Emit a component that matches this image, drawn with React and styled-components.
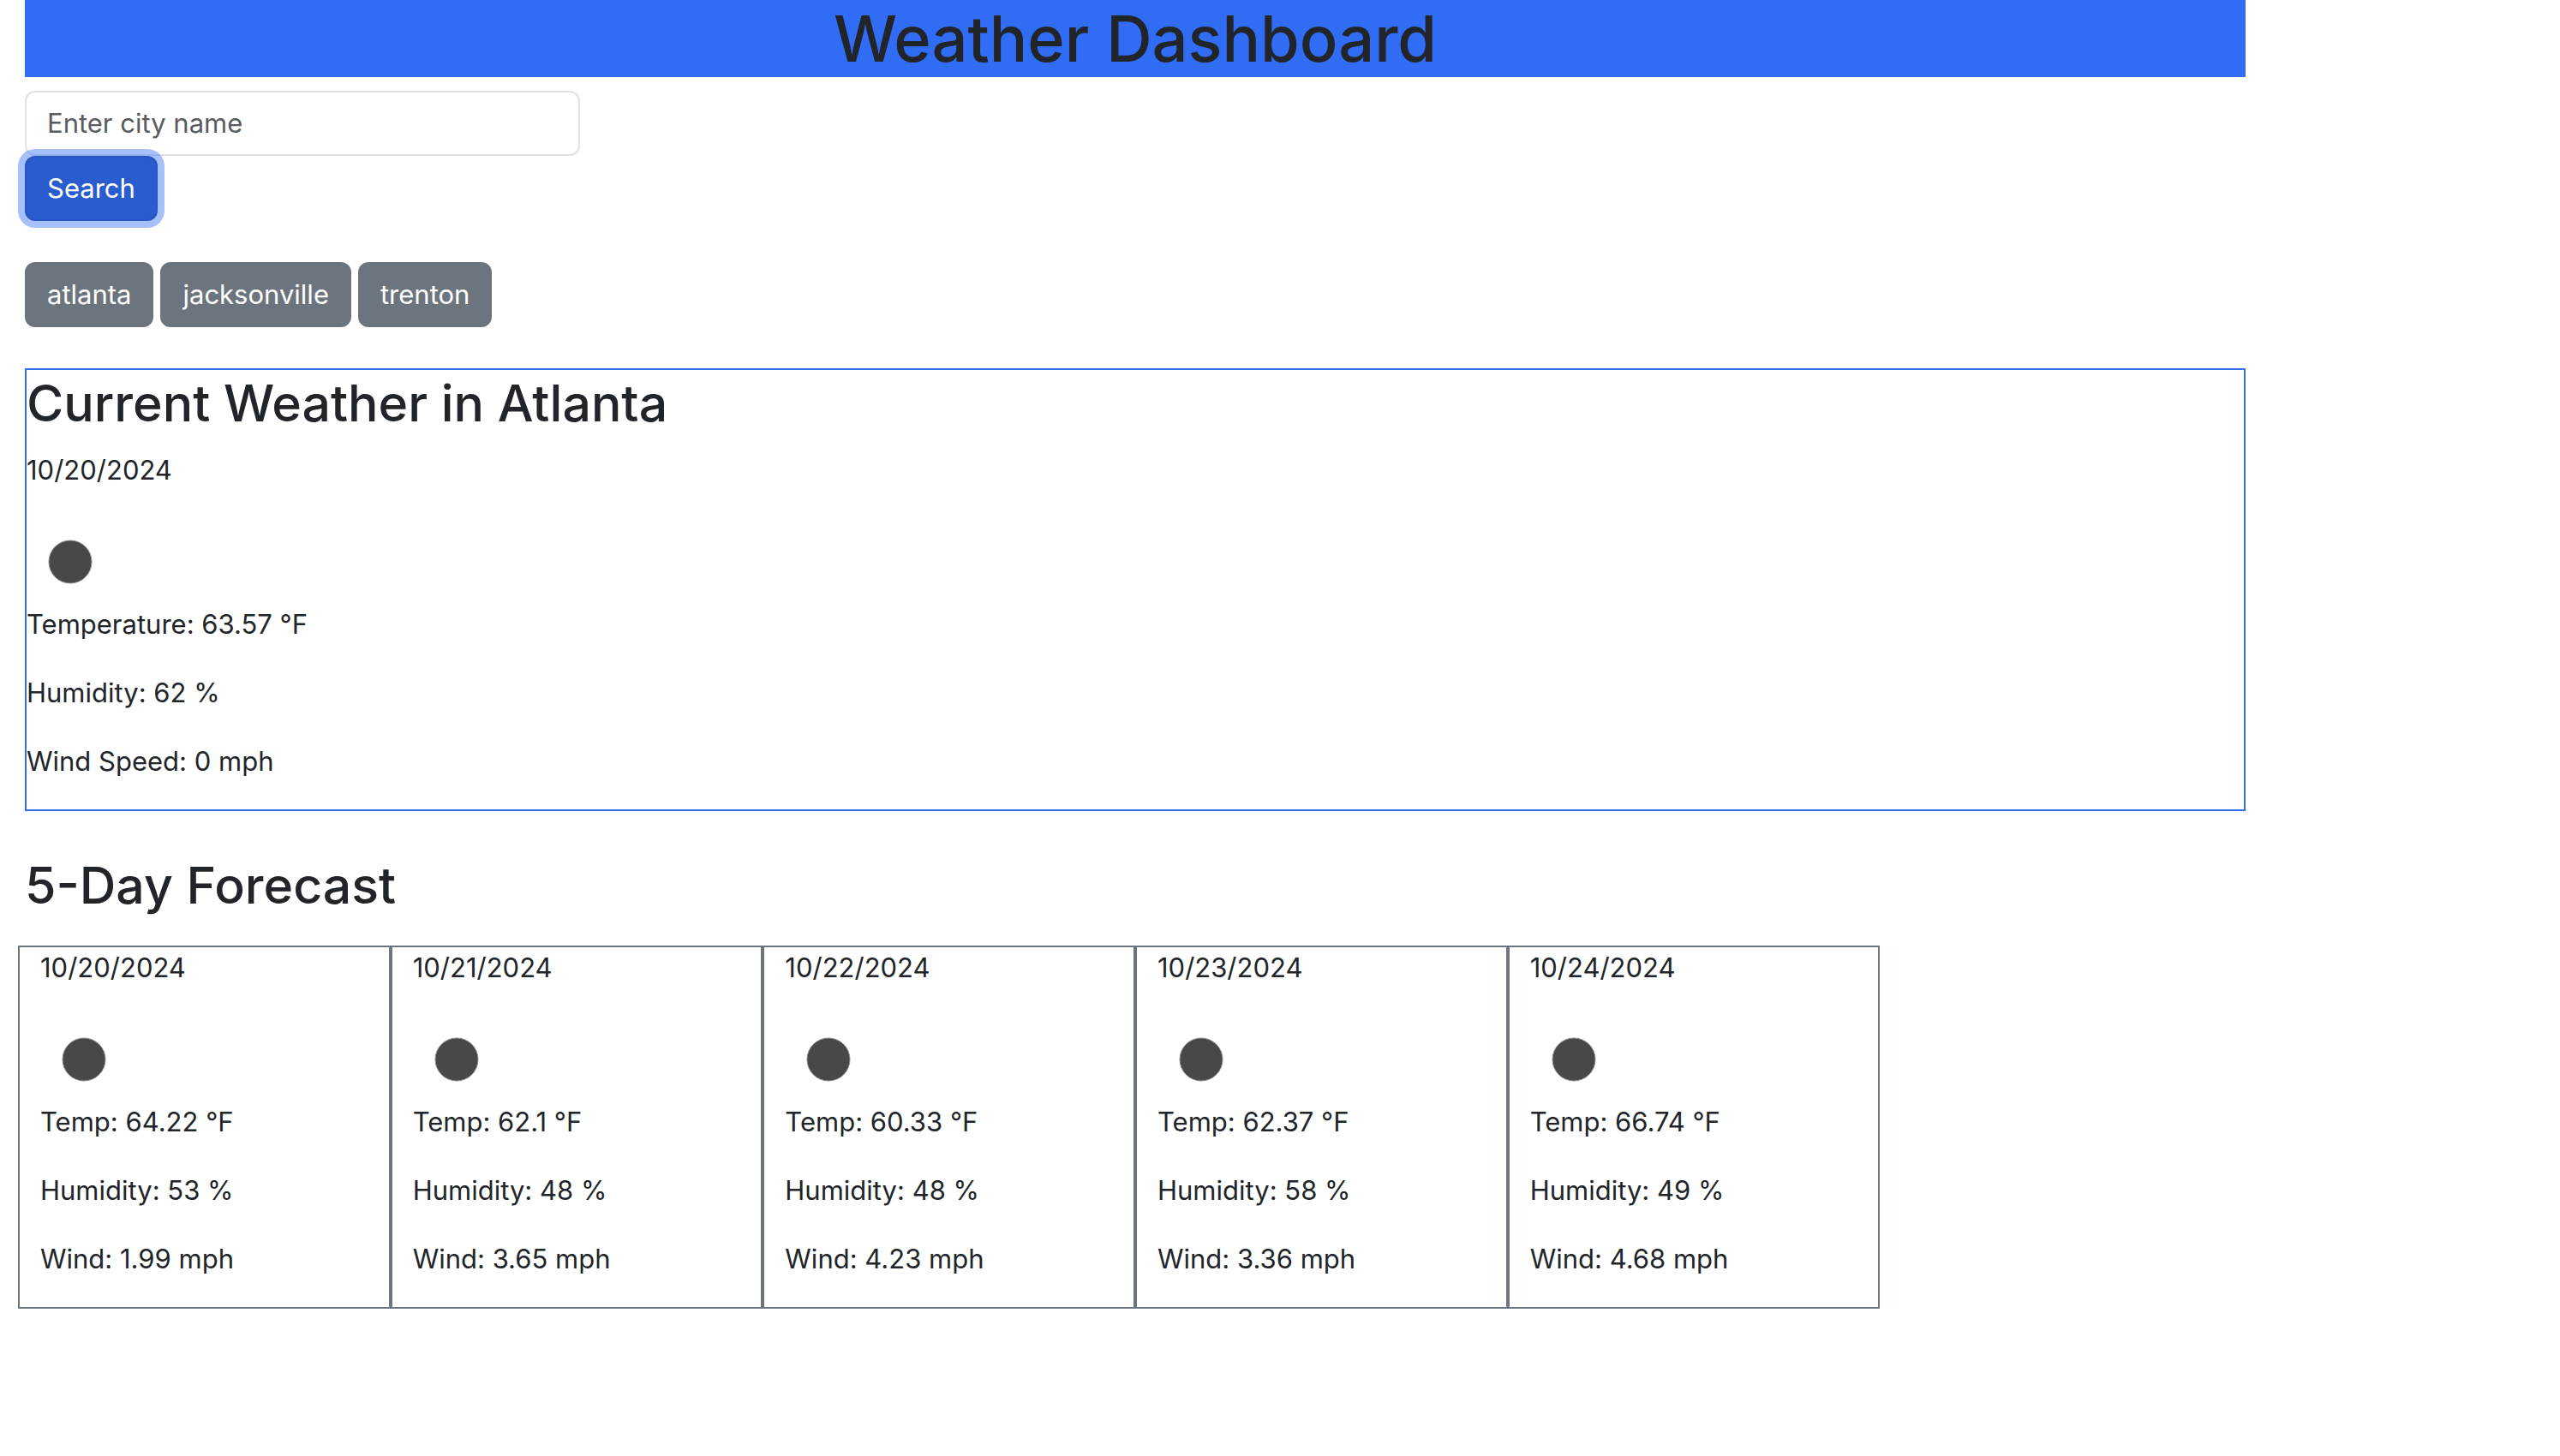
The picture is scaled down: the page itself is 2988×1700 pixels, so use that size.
import React, { useState } from "react";
import styled, { createGlobalStyle } from "styled-components";

const GlobalStyle = createGlobalStyle`
  *, *::before, *::after { box-sizing: border-box; }
  body {
    margin: 0;
    background: #ffffff;
    color: #212529;
    font-family: Inter, "Liberation Sans", sans-serif;
    font-size: 31px;
    line-height: 48px;
  }
`;

const Container = styled.main`
  width: 100%;
  max-width: 2650px;
  padding: 0 29px;
`;

const Banner = styled.header`
  background: #316cf4;
  text-align: center;
`;

const Title = styled.h1`
  margin: 0;
  font-size: 74px;
  font-weight: 500;
  line-height: 90px;
`;

const SearchForm = styled.form`
  display: flex;
  flex-direction: column;
  align-items: flex-start;
  margin: 16px 0 48px;
`;

const CityInput = styled.input`
  width: 25%;
  padding: 12px 24px;
  border: 2px solid #dee2e6;
  border-radius: 12px;
  background: #ffffff;
  color: inherit;
  font: inherit;
  outline: 0;

  &::placeholder {
    color: #595c5f;
    opacity: 1;
  }
`;

const Button = styled.button`
  padding: 12px 24px;
  border: 2px solid ${({ $primary }) => ($primary ? "#2756c3" : "#6c757d")};
  border-radius: 12px;
  background: ${({ $primary }) => ($primary ? "#295ccf" : "#6c757d")};
  box-shadow: ${({ $primary }) => ($primary ? "0 0 0 8px rgba(80, 130, 246, 0.5)" : "none")};
  color: #ffffff;
  font: inherit;
  cursor: pointer;
`;

const History = styled.nav`
  display: flex;
  flex-wrap: wrap;
  gap: 8px;
  margin-bottom: 48px;
`;

const Current = styled.section`
  margin-bottom: 48px;
  border: 2px solid #316cf4;
`;

const Heading = styled.h2`
  margin: 0 0 16px;
  font-size: 59px;
  font-weight: 500;
  line-height: 77px;
`;

const Reading = styled.p`
  margin: 0 0 32px;
`;

const Icon = styled.svg`
  display: block;
  width: 100px;
  height: 100px;
`;

const Days = styled.div`
  display: grid;
  grid-template-columns: repeat(6, 1fr);
  margin: 32px -8px 0;
`;

const Day = styled.article`
  padding: 0 24px;
  border: 2px solid #6c757d;
`;

const history = ["atlanta", "jacksonville", "trenton"];

const forecast = [
  { date: "10/20/2024", temp: "64.22", humidity: 53, wind: "1.99" },
  { date: "10/21/2024", temp: "62.1", humidity: 48, wind: "3.65" },
  { date: "10/22/2024", temp: "60.33", humidity: 48, wind: "4.23" },
  { date: "10/23/2024", temp: "62.37", humidity: 58, wind: "3.36" },
  { date: "10/24/2024", temp: "66.74", humidity: 49, wind: "4.68" },
];

function ClearNight() {
  return (
    <Icon viewBox="0 0 100 100" role="img" aria-label="Clear night">
      <circle cx="51" cy="51" r="25" fill="#48484a" stroke="#8b8b8c" strokeWidth="1" />
    </Icon>
  );
}

export default function App() {
  const [city, setCity] = useState("");
  return (
    <>
      <GlobalStyle />
      <Container>
        <Banner>
          <Title>Weather Dashboard</Title>
        </Banner>
        <SearchForm onSubmit={(event) => event.preventDefault()}>
          <CityInput
            type="text"
            aria-label="City name"
            placeholder="Enter city name"
            value={city}
            onChange={(event) => setCity(event.target.value)}
          />
          <Button type="submit" $primary>Search</Button>
        </SearchForm>
        <History aria-label="Search history">
          {history.map((name) => (
            <Button key={name} type="button" onClick={() => setCity(name)}>{name}</Button>
          ))}
        </History>
        <Current>
          <Heading>Current Weather in Atlanta</Heading>
          <Reading>10/20/2024</Reading>
          <ClearNight />
          <Reading>Temperature: 63.57 °F</Reading>
          <Reading>Humidity: 62 %</Reading>
          <Reading>Wind Speed: 0 mph</Reading>
        </Current>
        <section>
          <Heading>5-Day Forecast</Heading>
          <Days>
            {forecast.map((day) => (
              <Day key={day.date}>
                <Reading>{day.date}</Reading>
                <ClearNight />
                <Reading>Temp: {day.temp} °F</Reading>
                <Reading>Humidity: {day.humidity} %</Reading>
                <Reading>Wind: {day.wind} mph</Reading>
              </Day>
            ))}
          </Days>
        </section>
      </Container>
    </>
  );
}
